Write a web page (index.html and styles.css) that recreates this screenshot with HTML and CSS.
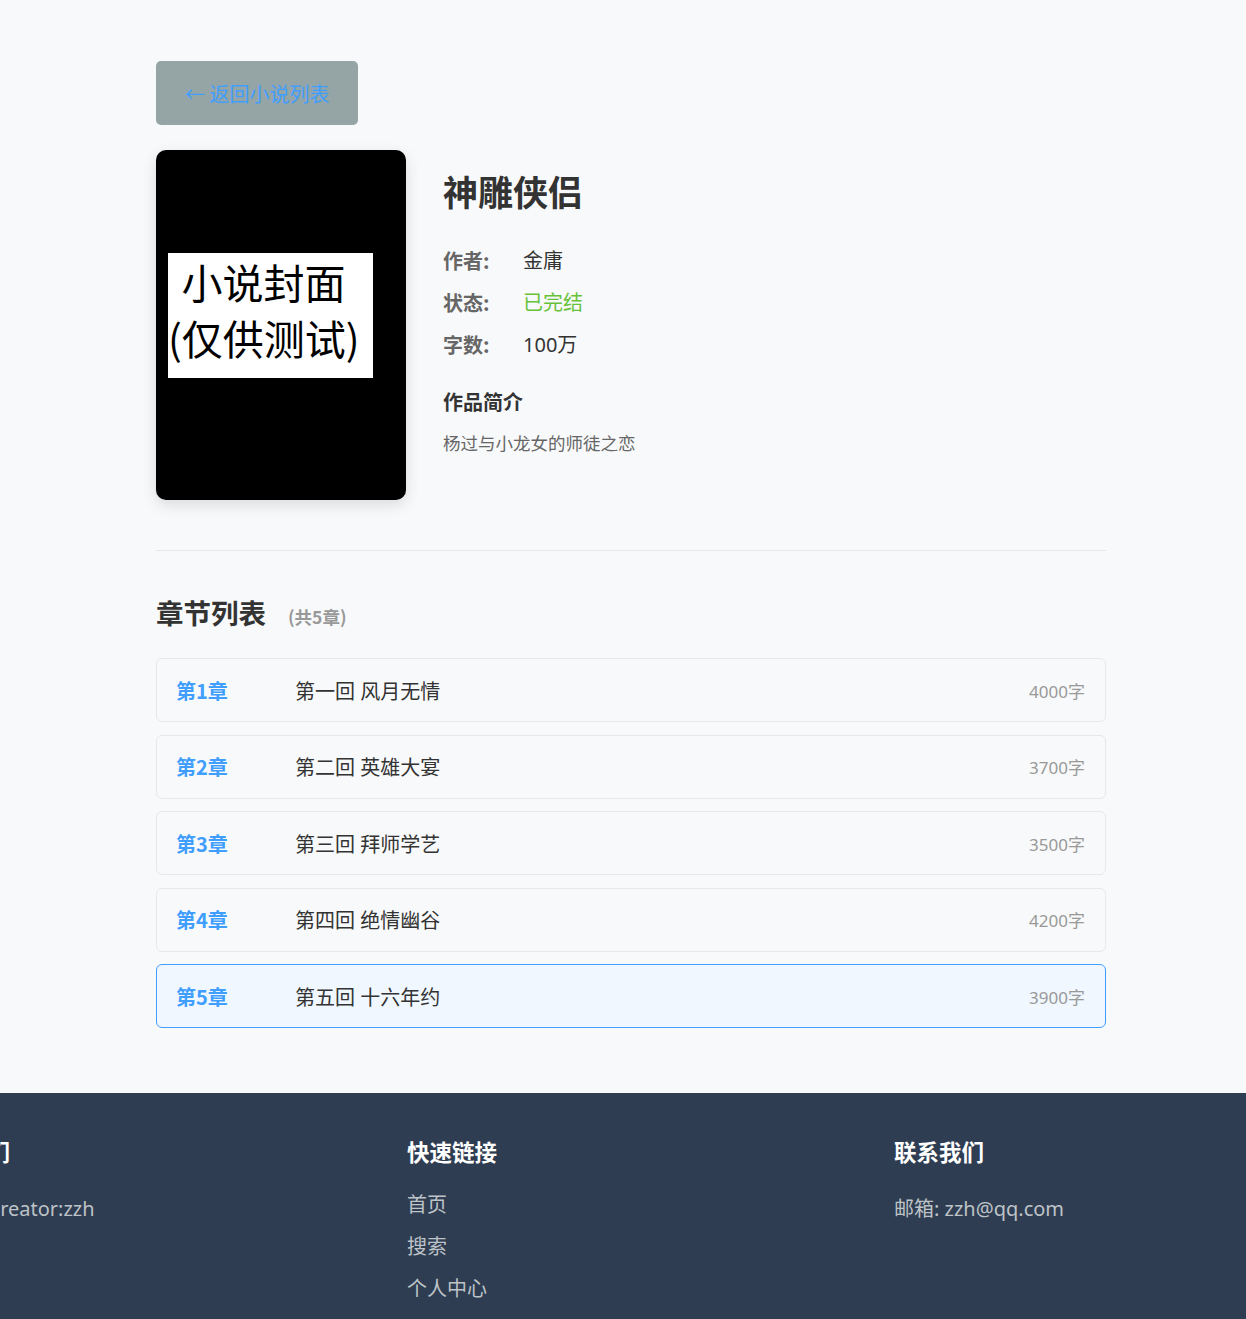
FILE: index.html
```html
<!DOCTYPE html>
<html lang="zh-CN">
<head>
<meta charset="utf-8">
<title>神雕侠侣</title>
<link rel="stylesheet" href="styles.css">
</head>
<body>
<main class="page">
  <a class="back-btn" href="#">← 返回小说列表</a>

  <section class="detail">
    <div class="cover">
      <div class="cover-label">小说封面<br>(仅供测试)</div>
    </div>
    <div class="info">
      <h1 class="title">神雕侠侣</h1>
      <div class="meta-row"><span class="meta-label">作者:</span><span class="meta-value">金庸</span></div>
      <div class="meta-row"><span class="meta-label">状态:</span><span class="meta-value status">已完结</span></div>
      <div class="meta-row"><span class="meta-label">字数:</span><span class="meta-value">100万</span></div>
      <h3 class="intro-title">作品简介</h3>
      <p class="intro">杨过与小龙女的师徒之恋</p>
    </div>
  </section>

  <section class="chapters">
    <h2 class="chapters-title">章节列表<span class="count">(共5章)</span></h2>
    <ul class="chapter-list">
      <li class="chapter"><span class="ch-num">第1章</span><span class="ch-name">第一回 风月无情</span><span class="ch-words">4000字</span></li>
      <li class="chapter"><span class="ch-num">第2章</span><span class="ch-name">第二回 英雄大宴</span><span class="ch-words">3700字</span></li>
      <li class="chapter"><span class="ch-num">第3章</span><span class="ch-name">第三回 拜师学艺</span><span class="ch-words">3500字</span></li>
      <li class="chapter"><span class="ch-num">第4章</span><span class="ch-name">第四回 绝情幽谷</span><span class="ch-words">4200字</span></li>
      <li class="chapter active"><span class="ch-num">第5章</span><span class="ch-name">第五回 十六年约</span><span class="ch-words">3900字</span></li>
    </ul>
  </section>
</main>

<footer class="footer">
  <div class="footer-inner">
    <div class="footer-col">
      <h4 class="footer-title">关于我们</h4>
      <p class="footer-text">开发者: creator:zzh</p>
    </div>
    <div class="footer-col">
      <h4 class="footer-title">快速链接</h4>
      <ul class="footer-links">
        <li><a href="#">首页</a></li>
        <li><a href="#">搜索</a></li>
        <li><a href="#">个人中心</a></li>
      </ul>
    </div>
    <div class="footer-col">
      <h4 class="footer-title">联系我们</h4>
      <p class="footer-text">邮箱: zzh@qq.com</p>
    </div>
  </div>
</footer>
</body>
</html>
```

FILE: styles.css
```css
* { box-sizing: border-box; }

html, body {
  margin: 0;
  padding: 0;
  background: #f8f9fa;
  font-family: "Noto Sans", "Noto Sans CJK SC", sans-serif;
  color: #333;
  overflow-x: hidden;
}

.page {
  width: 966px;
  margin: 0 auto;
  padding: 61px 0 65px 16px;
}

.back-btn {
  display: inline-block;
  height: 64px;
  line-height: 66px;
  padding: 0 29px;
  background: #95a5a6;
  color: #409eff;
  font-size: 20px;
  text-decoration: none;
  border-radius: 5px;
  font-family: "Noto Sans CJK SC", sans-serif;
}

.detail {
  display: flex;
  gap: 37px;
  margin-top: 25px;
  padding-bottom: 50px;
  border-bottom: 1px solid #e6e8eb;
}

.cover {
  flex: 0 0 250px;
  height: 350px;
  background: #000;
  border-radius: 10px;
  box-shadow: 0 5px 15px rgba(0, 0, 0, 0.12);
  padding: 103px 0 0 12px;
}

.cover-label {
  width: 205px;
  height: 125px;
  background: #fff;
  color: #000;
  font-family: "Noto Sans CJK SC", sans-serif;
  font-weight: 400;
  font-size: 41px;
  line-height: 56px;
  text-align: center;
  padding: 0 14px 0 0;
  white-space: nowrap;
}

.info {
  flex: 1;
  padding-top: 20px;
}

.title {
  margin: 0;
  font-size: 35px;
  line-height: 42px;
  font-weight: 700;
  color: #333;
  font-family: "Noto Sans CJK SC", sans-serif;
}

.meta-row {
  display: flex;
  font-size: 20px;
  line-height: 30px;
  margin-bottom: 12px;
}
.meta-row:first-of-type { margin-top: 34px; }

.meta-label {
  width: 80px;
  font-weight: 700;
  color: #666;
  font-family: "Noto Sans CJK SC", sans-serif;
}

.meta-value { color: #333; }
.status { color: #67c23a; }

.intro-title {
  margin: 27px 0 0;
  font-size: 20px;
  line-height: 30px;
  font-weight: 700;
  color: #333;
  font-family: "Noto Sans CJK SC", sans-serif;
}

.intro {
  margin: 12px 0 0;
  font-size: 17.5px;
  line-height: 28px;
  color: #666;
}

.chapters { margin-top: 43px; }

.chapters-title {
  margin: 0;
  font-size: 27.5px;
  line-height: 36px;
  font-weight: 700;
  color: #333;
  font-family: "Noto Sans CJK SC", sans-serif;
  display: flex;
  align-items: baseline;
}

.count {
  margin-left: 22px;
  font-size: 17.5px;
  font-weight: 700;
  color: #999;
}

.chapter-list {
  list-style: none;
  margin: 23px 0 0;
  padding: 0;
  display: flex;
  flex-direction: column;
  gap: 12.5px;
}

.chapter {
  display: flex;
  align-items: center;
  height: 64px;
  padding: 0 20px 0 19px;
  border: 1px solid #e6e8eb;
  border-radius: 6px;
  background: #f8f9fa;
  font-size: 20px;
}

.chapter.active {
  border-color: #409eff;
  background: #f0f7ff;
}

.ch-num {
  flex: 0 0 119px;
  color: #409eff;
  font-weight: 700;
  font-family: "Noto Sans CJK SC", sans-serif;
}

.ch-name {
  flex: 1;
  color: #333;
}

.ch-words {
  font-size: 17px;
  color: #999;
}

.footer {
  background: #2f3d52;
  color: #bdc3c7;
  padding: 43px 0 40px;
}

.footer-inner {
  display: grid;
  grid-template-columns: 487px 487px 487px;
  margin-left: -80px;
  width: 1461px;
}

.footer-title {
  margin: 0;
  font-size: 22.5px;
  line-height: 30px;
  font-weight: 700;
  color: #fff;
  font-family: "Noto Sans CJK SC", sans-serif;
}

.footer-text {
  margin: 28px 0 0;
  font-size: 20px;
  line-height: 30px;
  color: #bdc3c7;
  white-space: nowrap;
}

.footer-links {
  list-style: none;
  margin: 24px 0 0;
  padding: 0;
}

.footer-links li {
  font-size: 20px;
  line-height: 30px;
  margin-bottom: 12px;
}

.footer-links a {
  color: #bdc3c7;
  text-decoration: none;
}
```
